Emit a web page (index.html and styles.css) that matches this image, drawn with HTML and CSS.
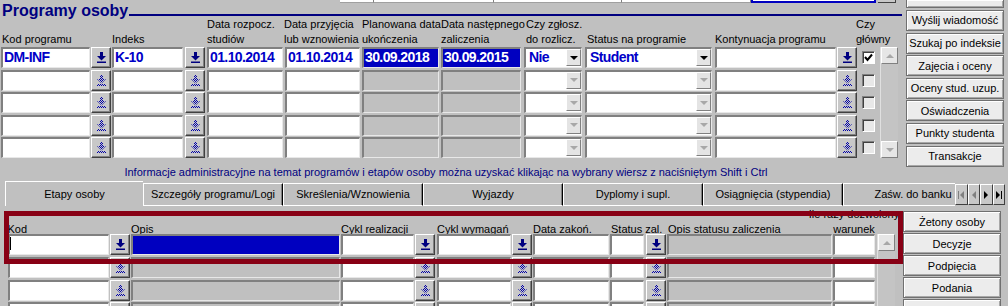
FILE: index.html
```html
<!DOCTYPE html>
<html lang="pl">
<head>
    <meta charset="UTF-8">
    <title>Programy osoby</title>
    <link rel="stylesheet" href="styles.css">
</head>
<body>
    <!-- shared icons -->
    <svg class="defs" width="0" height="0" aria-hidden="true">
        <defs>
            <pattern id="dith" width="2" height="2" patternUnits="userSpaceOnUse">
                <rect width="1" height="1" fill="#0000a8"/>
                <rect x="1" y="1" width="1" height="1" fill="#0000a8"/>
            </pattern>
            <symbol id="lov" viewBox="0 0 9 11">
                <g fill="#000080"><rect x="3" y="0" width="3" height="5"/><polygon points="0,4 9,4 4.5,8.5"/><rect x="0" y="9.5" width="9" height="1.5"/></g>
            </symbol>
            <symbol id="lov-off" viewBox="0 0 9 11">
                <g fill="url(#dith)"><rect x="3" y="0" width="3" height="5"/><polygon points="0,4 9,4 4.5,8.5"/><rect x="0" y="9" width="9" height="2"/></g>
            </symbol>
        </defs>
    </svg>

    <div class="upper">
        <div class="main">
            <div class="strip">
                <span class="sf" style="width:34px"></span>
                <span class="sf" style="width:120px"></span>
                <span class="sf" style="width:128px"></span>
                <span class="sf" style="width:129px"></span>
                <span class="sf blue" style="width:125px"></span>
                <span class="sbtn"></span>
            </div>
            <div class="title-row">
                <h1>Programy osoby</h1>
                <div class="rule"></div>
            </div>

            <div class="prog head">
                <div class="lbl" style="grid-column:1;margin-left:1px">Kod programu</div>
                <div class="lbl" style="grid-column:3">Indeks</div>
                <div class="lbl" style="grid-column:5">Data rozpocz.<br>studiów</div>
                <div class="lbl" style="grid-column:6;margin-left:-1px">Data przyjęcia<br>lub wznowienia</div>
                <div class="lbl" style="grid-column:7">Planowana data<br>ukończenia</div>
                <div class="lbl" style="grid-column:8">Data następnego<br>zaliczenia</div>
                <div class="lbl" style="grid-column:9;margin-left:2px">Czy zgłosz.<br>do rozlicz.</div>
                <div class="lbl" style="grid-column:10;margin-left:2px">Status na programie</div>
                <div class="lbl" style="grid-column:11">Kontynuacja programu</div>
                <div class="lbl" style="grid-column:13;margin-left:-6px">Czy<br>główny</div>
            </div>

            <div class="prog rows">
                <!-- row 1 (current) -->
                <div class="f w89 cur">DM-INF</div>
                <span class="lov"><svg><use href="#lov"/></svg></span>
                <div class="f w71 cur">K-10</div>
                <span class="lov"><svg><use href="#lov"/></svg></span>
                <div class="f w76 cur">01.10.2014</div>
                <div class="f w75 cur">01.10.2014</div>
                <div class="f w77 sel">30.09.2018</div>
                <div class="f w80 sel">30.09.2015</div>
                <div class="f cb w58 cur">Nie<span class="dd"></span></div>
                <div class="f cb w127 cur">Student<span class="dd"></span></div>
                <div class="f w121"></div>
                <span class="lov"><svg><use href="#lov"/></svg></span>
                <span class="chk"><svg viewBox="0 0 11 11"><polyline points="2,5 4.5,8 9,2.5" fill="none" stroke="#000" stroke-width="2"/></svg></span>
                <div class="sb up-sb">
                    <span class="sb-btn up"></span>
                    <span class="sb-btn down"></span>
                </div>

                <!-- rows 2-5 -->
                <div class="f w89"></div>
                <span class="lov"><svg><use href="#lov-off"/></svg></span>
                <div class="f w71"></div>
                <span class="lov"><svg><use href="#lov-off"/></svg></span>
                <div class="f w76"></div>
                <div class="f w75"></div>
                <div class="f w77 off"></div>
                <div class="f w80 off"></div>
                <div class="f cb w58"><span class="dd dis"></span></div>
                <div class="f cb w127"><span class="dd dis"></span></div>
                <div class="f w121"></div>
                <span class="lov"><svg><use href="#lov-off"/></svg></span>
                <span class="chk off"></span>

                <div class="f w89"></div>
                <span class="lov"><svg><use href="#lov-off"/></svg></span>
                <div class="f w71"></div>
                <span class="lov"><svg><use href="#lov-off"/></svg></span>
                <div class="f w76"></div>
                <div class="f w75"></div>
                <div class="f w77 off"></div>
                <div class="f w80 off"></div>
                <div class="f cb w58"><span class="dd dis"></span></div>
                <div class="f cb w127"><span class="dd dis"></span></div>
                <div class="f w121"></div>
                <span class="lov"><svg><use href="#lov-off"/></svg></span>
                <span class="chk off"></span>

                <div class="f w89"></div>
                <span class="lov"><svg><use href="#lov-off"/></svg></span>
                <div class="f w71"></div>
                <span class="lov"><svg><use href="#lov-off"/></svg></span>
                <div class="f w76"></div>
                <div class="f w75"></div>
                <div class="f w77 off"></div>
                <div class="f w80 off"></div>
                <div class="f cb w58"><span class="dd dis"></span></div>
                <div class="f cb w127"><span class="dd dis"></span></div>
                <div class="f w121"></div>
                <span class="lov"><svg><use href="#lov-off"/></svg></span>
                <span class="chk off"></span>

                <div class="f w89"></div>
                <span class="lov"><svg><use href="#lov-off"/></svg></span>
                <div class="f w71"></div>
                <span class="lov"><svg><use href="#lov-off"/></svg></span>
                <div class="f w76"></div>
                <div class="f w75"></div>
                <div class="f w77 off"></div>
                <div class="f w80 off"></div>
                <div class="f cb w58"><span class="dd dis"></span></div>
                <div class="f cb w127"><span class="dd dis"></span></div>
                <div class="f w121"></div>
                <span class="lov"><svg><use href="#lov-off"/></svg></span>
                <span class="chk off"></span>
            </div>

            <p class="info">Informacje administracyjne na temat programów i etapów osoby można uzyskać klikając na wybrany wiersz z naciśniętym Shift i Ctrl</p>
        </div>

        <div class="side">
            <span class="btn stub"></span>
            <button class="btn">Wyślij wiadomość</button>
            <button class="btn">Szukaj po indeksie</button>
            <button class="btn">Zajęcia i oceny</button>
            <button class="btn">Oceny stud. uzup.</button>
            <button class="btn">Oświadczenia</button>
            <button class="btn">Punkty studenta</button>
            <button class="btn">Transakcje</button>
        </div>
    </div>

    <div class="tabs">
        <div class="tab-list">
            <span class="tab on first">Etapy osoby</span>
            <span class="tab">Szczegóły programu/Logi</span>
            <span class="tab">Skreślenia/Wznowienia</span>
            <span class="tab">Wyjazdy</span>
            <span class="tab">Dyplomy i supl.</span>
            <span class="tab">Osiągnięcia (stypendia)</span>
            <span class="tab">Zaśw. do banku</span>
        </div>
        <div class="tab-nav">
            <span><svg viewBox="0 0 6 8"><rect x="0" y="0" width="1" height="8" fill="#808080"/><polygon points="6,0 6,8 2,4" fill="#808080"/></svg></span>
            <span><svg viewBox="0 0 6 8"><polygon points="5,0 5,8 1,4" fill="#808080"/></svg></span>
            <span><svg viewBox="0 0 6 8"><polygon points="1,0 1,8 5,4" fill="#000"/></svg></span>
            <span><svg viewBox="0 0 6 8"><polygon points="0,0 0,8 4,4" fill="#000"/><rect x="5" y="0" width="1" height="8" fill="#000"/></svg></span>
        </div>
    </div>

    <div class="lower">
        <div class="panel">
            <div class="stage head">
                <div class="lbl" style="grid-column:1;margin-left:-0.5px">Kod</div>
                <div class="lbl" style="grid-column:3">Opis</div>
                <div class="lbl" style="grid-column:4">Cykl realizacji</div>
                <div class="lbl" style="grid-column:6">Cykl wymagań</div>
                <div class="lbl" style="grid-column:8">Data zakoń.</div>
                <div class="lbl" style="grid-column:9;margin-left:1px">Status zal.</div>
                <div class="lbl" style="grid-column:11;margin-left:1px">Opis statusu zaliczenia</div>
                <div class="lbl war" style="grid-column:12">Ile razy dozwolony<br>warunek</div>
            </div>

            <div class="stage rows">
                <div class="f w101"><span class="caret"></span></div>
                <span class="lov"><svg><use href="#lov"/></svg></span>
                <div class="f w209 sel"></div>
                <div class="f w73"></div>
                <span class="lov"><svg><use href="#lov"/></svg></span>
                <div class="f w74"></div>
                <span class="lov"><svg><use href="#lov"/></svg></span>
                <div class="f w76"></div>
                <div class="f w34"></div>
                <span class="lov"><svg><use href="#lov"/></svg></span>
                <div class="f w165 off"></div>
                <div class="f w42"></div>
                <div class="sb low-sb">
                    <span class="sb-btn up"></span>
                </div>

                <div class="f w101"></div>
                <span class="lov"><svg><use href="#lov-off"/></svg></span>
                <div class="f w209 off"></div>
                <div class="f w73"></div>
                <span class="lov"><svg><use href="#lov-off"/></svg></span>
                <div class="f w74"></div>
                <span class="lov"><svg><use href="#lov-off"/></svg></span>
                <div class="f w76"></div>
                <div class="f w34"></div>
                <span class="lov"><svg><use href="#lov-off"/></svg></span>
                <div class="f w165 off"></div>
                <div class="f w42"></div>

                <div class="f w101"></div>
                <span class="lov"><svg><use href="#lov-off"/></svg></span>
                <div class="f w209 off"></div>
                <div class="f w73"></div>
                <span class="lov"><svg><use href="#lov-off"/></svg></span>
                <div class="f w74"></div>
                <span class="lov"><svg><use href="#lov-off"/></svg></span>
                <div class="f w76"></div>
                <div class="f w34"></div>
                <span class="lov"><svg><use href="#lov-off"/></svg></span>
                <div class="f w165 off"></div>
                <div class="f w42"></div>

                <div class="f w101"></div>
                <span class="lov"><svg><use href="#lov-off"/></svg></span>
                <div class="f w209 off"></div>
                <div class="f w73"></div>
                <span class="lov"><svg><use href="#lov-off"/></svg></span>
                <div class="f w74"></div>
                <span class="lov"><svg><use href="#lov-off"/></svg></span>
                <div class="f w76"></div>
                <div class="f w34"></div>
                <span class="lov"><svg><use href="#lov-off"/></svg></span>
                <div class="f w165 off"></div>
                <div class="f w42"></div>
            </div>
            <div class="frame"></div>
        </div>

        <div class="side side-low">
            <button class="btn">Żetony osoby</button>
            <button class="btn">Decyzje</button>
            <button class="btn">Podpięcia</button>
            <button class="btn">Podania</button>
            <button class="btn"></button>
        </div>
    </div>
</body>
</html>
```

FILE: styles.css
```css
* {
    box-sizing: border-box;
}
html, body {
    margin: 0;
    height: 306px;
    overflow: hidden;
}
body {
    width: 1008px;
    background: #c0c0c0;
    font-family: "Liberation Sans", Arial, sans-serif;
    font-size: 11px;
    color: #000;
}
.defs {
    position: absolute;
    width: 0;
    height: 0;
}

/* ---- upper block ---- */
.upper {
    display: flex;
}
.main {
    width: 906px;
}
.strip {
    display: flex;
    height: 3px;
    padding-left: 340px;
}
.sf {
    height: 3px;
    background: #fff;
    border-right: 1px solid #808080;
    border-bottom: 1px solid #a0a0a0;
}
.sf.blue {
    border: 2px solid #0000c0;
    border-top: none;
}
.sbtn {
    width: 18px;
    height: 3px;
    margin-left: 2px;
    background: #c8c8c8;
    border-right: 1px solid #404040;
    border-bottom: 1px solid #404040;
}
.title-row {
    display: flex;
    height: 14px;
}
h1 {
    margin: 0 0 0 2px;
    font-size: 16px;
    line-height: 16px;
    color: #000080;
    white-space: nowrap;
}
.rule {
    flex: 1;
    height: 2px;
    margin: 11px 4px 0 1px;
    background: #000080;
}

.prog {
    display: grid;
    padding-left: 1px;
    grid-template-columns: 90px 21px 73px 22px 78px 77px 79px 83px 61px 130px 122px 25px 18px 18px;
}
.prog.head {
    height: 30px;
}
.prog.rows {
    grid-template-rows: repeat(5, 21px);
    row-gap: 1.6px;
}
.lbl {
    grid-row: 1;
    align-self: end;
    line-height: 14.5px;
    white-space: nowrap;
    margin-bottom: 1px;
}

/* text items */
.f {
    display: flex;
    height: 21px;
    padding-left: 1px;
    background: #fff;
    border-style: solid;
    border-width: 2px 1px 1px 2px;
    border-color: #808080 #e8e8e8 #e8e8e8 #808080;
    font-size: 14px;
    font-weight: bold;
    letter-spacing: -0.6px;
    line-height: 17px;
    color: #0000c8;
    white-space: nowrap;
    overflow: hidden;
}
.f.off {
    background: #c0c0c0;
}
.f.sel {
    background: #0000c0;
    color: #fff;
}
.f.cb {
    padding-left: 3px;
}
.w34 { width: 34px; }
.w42 { width: 42px; }
.w58 { width: 58px; }
.w71 { width: 71px; }
.w73 { width: 73px; }
.w74 { width: 74px; }
.w75 { width: 75px; }
.w76 { width: 76px; }
.w77 { width: 77px; }
.w80 { width: 80px; }
.w89 { width: 89px; }
.w101 { width: 101px; }
.w121 { width: 121px; }
.w127 { width: 127px; }
.w165 { width: 165px; }
.w209 { width: 209px; }

.dd {
    display: flex;
    align-items: center;
    justify-content: center;
    width: 15px;
    height: 17px;
    margin-left: auto;
    background: #e4e4e4;
    border: 1px solid;
    border-color: #fff #808080 #808080 #fff;
}
.dd::after {
    content: "";
    border-left: 4px solid transparent;
    border-right: 4px solid transparent;
    border-top: 4px solid #000;
}
.dd.dis::after {
    border-top-color: #a8a8a8;
}

.lov {
    display: flex;
    align-items: center;
    justify-content: center;
    width: 20px;
    height: 21px;
    background: #c8c8c8;
    border: 1px solid;
    border-color: #fff #404040 #404040 #fff;
    box-shadow: inset -1px -1px #808080;
}
.lov svg {
    width: 9px;
    height: 11px;
}

.chk {
    align-self: center;
    width: 13px;
    height: 13px;
    background: #fff;
    border: 1px solid;
    border-color: #808080 #fff #fff #808080;
    box-shadow: inset 1px 1px #404040;
}
.chk svg {
    display: block;
    width: 11px;
    height: 11px;
}
.chk.off {
    background: #e8e8e8;
}

.sb {
    display: flex;
    flex-direction: column;
    justify-content: space-between;
    width: 18px;
    background: #c4c4c4;
    border-left: 1px solid #e0e0e0;
}
.up-sb {
    grid-column: 14;
    grid-row: 1 / span 5;
}
.sb-btn {
    display: flex;
    align-items: center;
    justify-content: center;
    height: 17px;
    background: #e6e6e6;
    border: 1px solid;
    border-color: #fff #808080 #808080 #fff;
}
.sb-btn::after {
    content: "";
    border-left: 4px solid transparent;
    border-right: 4px solid transparent;
}
.sb-btn.up::after {
    border-bottom: 4px solid #a8a8a8;
}
.sb-btn.down::after {
    border-top: 4px solid #a8a8a8;
}

.info {
    margin: 7px 0 0;
    padding-right: 14px;
    line-height: 14px;
    text-align: center;
    color: #000080;
}

/* ---- side buttons ---- */
.side {
    display: flex;
    flex-direction: column;
    gap: 1.6px;
    width: 98px;
}
.btn {
    flex: none;
    height: 21px;
    margin: 0;
    padding: 0;
    font-family: inherit;
    font-size: 11px;
    color: #000;
    background: #ececec;
    border: 1px solid #707070;
    box-shadow: inset 1px 1px #fff, inset -1px -1px #a8a8a8;
    white-space: nowrap;
}
.btn.stub {
    height: 8px;
    margin-bottom: 0.4px;
    border-top: none;
}

/* ---- tabs ---- */
.tabs {
    display: flex;
    height: 25px;
    margin-top: 2px;
}
.tab-list {
    display: flex;
    width: 955px;
    padding-left: 5px;
    overflow: hidden;
}
.tab {
    flex: none;
    width: 140px;
    height: 23px;
    margin-top: 2px;
    border-top: 1px solid #fff;
    border-left: 1px solid #fff;
    border-right: 1px solid #000;
    border-bottom: 1px solid #fff;
    box-shadow: inset -1px 0 #808080;
    line-height: 21px;
    text-align: center;
    white-space: nowrap;
}
.tab.first {
    width: 138px;
}
.tab.on {
    height: 25px;
    margin-top: 0;
    padding-top: 2px;
    border-bottom: none;
    border-right: none;
    box-shadow: none;
}
.tab-nav {
    display: flex;
    height: 21px;
    margin-top: 3px;
}
.tab-nav span {
    display: flex;
    align-items: center;
    justify-content: center;
    width: 12.5px;
    background: #c8c8c8;
    border: 1px solid;
    border-color: #fff #404040 #404040 #fff;
}
.tab-nav svg {
    width: 6px;
    height: 8px;
}

/* ---- lower block ---- */
.lower {
    display: flex;
    margin-top: 1px;
}
.panel {
    position: relative;
    width: 903px;
}
.stage {
    display: grid;
    padding-left: 8px;
    grid-template-columns: 102px 21px 210px 74px 22px 75px 21px 77px 36px 21px 166px 44px 18px;
}
.stage.head {
    height: 27px;
}
.stage.head .lbl {
    margin-bottom: 0;
}
.stage.rows {
    grid-template-rows: repeat(4, 21px);
    row-gap: 1.7px;
}
.lbl.war {
    width: 100px;
    margin-left: -29px;
    text-align: center;
}
.caret {
    width: 2px;
    height: 13px;
    margin: 1px 0 0 -2px;
    background: #000;
}
.low-sb {
    grid-column: 13;
    grid-row: 1 / span 4;
    justify-content: flex-start;
}
.frame {
    position: absolute;
    left: 4px;
    top: 4px;
    width: 899px;
    height: 53px;
    border: 5px solid #880015;
    pointer-events: none;
}
.side-low {
    gap: 1.5px;
    padding-top: 4px;
}
.side-low .btn {
    height: 20.5px;
}
```
